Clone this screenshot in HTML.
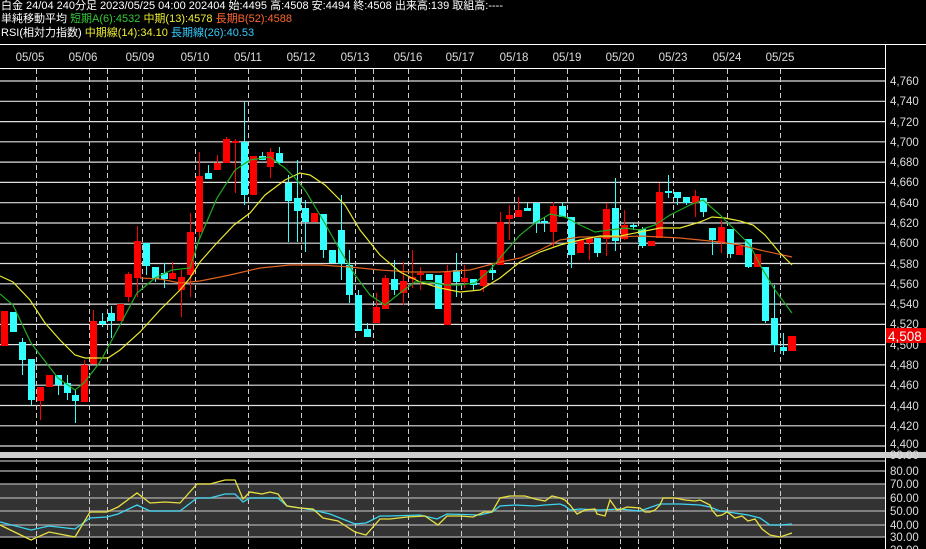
<!DOCTYPE html>
<html><head><meta charset="utf-8"><style>
html,body{margin:0;padding:0;background:#000;width:926px;height:549px;overflow:hidden}
.t{position:absolute;left:1px;font:11px "Liberation Sans","Noto Sans CJK JP",sans-serif;color:#fff;white-space:nowrap;line-height:13px}
svg{position:absolute;left:0;top:0}
svg text{font-family:"Liberation Sans",sans-serif}
</style></head><body>
<div class="t" style="top:0">白金 24/04 240分足 2023/05/25 04:00 202404 始:4495 高:4508 安:4494 終:4508 出来高:139 取組高:----</div>
<div class="t" style="top:13px">単純移動平均 <span style="color:#3c3">短期A(6):4532</span> <span style="color:#ee3">中期(13):4578</span> <span style="color:#f63">長期B(52):4588</span></div>
<div class="t" style="top:27px">RSI(相対力指数) <span style="color:#ee3">中期線(14):34.10</span> <span style="color:#3cf">長期線(26):40.53</span></div>
<svg width="926" height="549" viewBox="0 0 926 549">
<line x1="0" y1="44.5" x2="926" y2="44.5" stroke="#fff"/>
<line x1="0" y1="68.5" x2="885" y2="68.5" stroke="#fff"/>
<line x1="885.5" y1="44" x2="885.5" y2="549" stroke="#fff"/>
<g fill="#ddd" font-size="11.5" text-anchor="middle">
<text x="30" y="61">05/05</text><text x="83" y="61">05/06</text><text x="140" y="61">05/09</text><text x="195" y="61">05/10</text><text x="248" y="61">05/11</text><text x="301" y="61">05/12</text><text x="355" y="61">05/13</text><text x="408" y="61">05/16</text><text x="460" y="61">05/17</text><text x="514" y="61">05/18</text><text x="567" y="61">05/19</text><text x="620" y="61">05/20</text><text x="673" y="61">05/23</text><text x="727" y="61">05/24</text><text x="780" y="61">05/25</text>
</g>
<!-- RSI band -->
<rect x="0" y="484" width="885" height="53" fill="#333"/>
<!-- horizontal grid -->
<g stroke="#e0e0e0" stroke-width="1.2">
<line x1="0" y1="81" x2="885" y2="81"/><line x1="0" y1="101.3" x2="885" y2="101.3"/><line x1="0" y1="121.6" x2="885" y2="121.6"/><line x1="0" y1="141.8" x2="885" y2="141.8"/><line x1="0" y1="162.1" x2="885" y2="162.1"/><line x1="0" y1="182.4" x2="885" y2="182.4"/><line x1="0" y1="202.7" x2="885" y2="202.7"/><line x1="0" y1="223" x2="885" y2="223"/><line x1="0" y1="243.2" x2="885" y2="243.2"/><line x1="0" y1="263.5" x2="885" y2="263.5"/><line x1="0" y1="283.8" x2="885" y2="283.8"/><line x1="0" y1="304.1" x2="885" y2="304.1"/><line x1="0" y1="324.4" x2="885" y2="324.4"/><line x1="0" y1="344.6" x2="885" y2="344.6"/><line x1="0" y1="364.9" x2="885" y2="364.9"/><line x1="0" y1="385.2" x2="885" y2="385.2"/><line x1="0" y1="405.5" x2="885" y2="405.5"/><line x1="0" y1="425.8" x2="885" y2="425.8"/><line x1="0" y1="446" x2="885" y2="446"/>
</g>
<rect x="0" y="452" width="926" height="6" fill="#ccc"/>
<g stroke="#999" stroke-width="1.5">
<line x1="0" y1="461" x2="885" y2="461"/><line x1="0" y1="471" x2="885" y2="471"/><line x1="0" y1="484" x2="885" y2="484"/><line x1="0" y1="498" x2="885" y2="498"/><line x1="0" y1="511" x2="885" y2="511"/><line x1="0" y1="525" x2="885" y2="525"/><line x1="0" y1="537" x2="885" y2="537"/>
</g>
<!-- vertical dashed -->
<g stroke="#ccc" stroke-dasharray="5,3">
<path d="M36.5 69V452M89.5 69V452M107.5 69V452M142.5 69V452M195.5 69V452M248.5 69V452M301.5 69V452M355.5 69V452M373.5 69V452M408.5 69V452M461.5 69V452M514.5 69V452M567.5 69V452M620.5 69V452M638.5 69V452M673.5 69V452M727.5 69V452M780.5 69V452"/>
<path d="M36.5 459V549M89.5 459V549M107.5 459V549M142.5 459V549M195.5 459V549M248.5 459V549M301.5 459V549M355.5 459V549M373.5 459V549M408.5 459V549M461.5 459V549M514.5 459V549M567.5 459V549M620.5 459V549M638.5 459V549M673.5 459V549M727.5 459V549M780.5 459V549"/>
</g>
<!-- wicks -->
<g stroke-width="1">
<path stroke="#f00" d="M4.5 311V346M40.5 387V420M49.5 375V387M84.5 360V402M93.5 310V364M120.5 304V321M128.5 272V302M137.5 226V297M172.5 262V279M181.5 270V317M190.5 213V297M199.5 152V238M217.5 155V170M226.5 137V163M235.5 139V193M253.5 156V195M270.5 148V178M314.5 213V222M376.5 293V323M385.5 275V309M403.5 262V305M412.5 250V288M420.5 267V290M447.5 265V325M464.5 265V288M483.5 270V292M500.5 212V265M509.5 205V240M518.5 197V217M553.5 202V247M580.5 240V253M589.5 238V260M606.5 203V256M624.5 210V240M651.5 241V246M659.5 183V238M695.5 190V217M721.5 220V253M739.5 246V255M757.5 254V267M792.5 336V351"/>
<path stroke="#3ff" d="M13.5 312V332M22.5 338V375M31.5 359V405M58.5 375V395M67.5 375V400M75.5 390V423M102.5 313V327M111.5 306V338M146.5 243V275M155.5 267V282M164.5 263V288M208.5 165V179M244.5 102V205M262.5 152V160M279.5 147V165M288.5 175V242M297.5 160V242M305.5 200V252M323.5 214V258M332.5 250V263M341.5 195V280M349.5 250V303M358.5 290V331M367.5 323V337M394.5 260V295M429.5 274V280M438.5 275V309M456.5 253V297M473.5 279V290M492.5 265V280M527.5 203V211M536.5 203V233M544.5 217V232M562.5 202V217M571.5 217V268M597.5 238V257M615.5 178V251M633.5 223V230M642.5 227V248M668.5 175V198M677.5 192V205M686.5 197V205M703.5 198V217M712.5 228V255M730.5 229V258M748.5 239V268M765.5 267V323M774.5 285V352M783.5 333V355"/>
</g>
<!-- bodies -->
<g fill="#f00">
<rect x="1" y="311" width="7" height="35"/><rect x="37" y="387" width="7" height="14"/><rect x="46" y="375" width="7" height="12"/><rect x="81" y="365" width="7" height="37"/><rect x="90" y="321" width="7" height="43"/><rect x="117" y="304" width="7" height="17"/><rect x="125" y="274" width="7" height="23"/><rect x="134" y="241" width="7" height="37"/><rect x="169" y="273" width="7" height="6"/><rect x="178" y="277" width="7" height="13"/><rect x="187" y="232" width="7" height="43"/><rect x="196" y="176" width="7" height="56"/><rect x="214" y="163" width="7" height="7"/><rect x="223" y="139" width="7" height="24"/><rect x="232" y="141" width="7" height="2"/><rect x="250" y="156" width="7" height="39"/><rect x="267" y="152" width="7" height="15"/><rect x="311" y="213" width="7" height="9"/><rect x="373" y="307" width="7" height="16"/><rect x="382" y="278" width="7" height="31"/><rect x="400" y="281" width="7" height="12"/><rect x="409" y="277" width="7" height="2"/><rect x="417" y="273" width="7" height="2"/><rect x="444" y="272" width="7" height="53"/><rect x="461" y="278" width="7" height="4"/><rect x="480" y="270" width="7" height="16"/><rect x="497" y="222" width="7" height="43"/><rect x="506" y="215" width="7" height="4"/><rect x="515" y="210" width="7" height="7"/><rect x="550" y="206" width="7" height="26"/><rect x="577" y="240" width="7" height="13"/><rect x="586" y="238" width="7" height="5"/><rect x="603" y="209" width="7" height="30"/><rect x="621" y="225" width="7" height="14"/><rect x="648" y="241" width="7" height="5"/><rect x="656" y="192" width="7" height="46"/><rect x="692" y="196" width="7" height="7"/><rect x="718" y="227" width="7" height="16"/><rect x="736" y="246" width="7" height="9"/><rect x="754" y="254" width="7" height="13"/><rect x="788" y="336" width="8" height="15"/>
</g>
<g fill="#3ff">
<rect x="10" y="312" width="7" height="20"/><rect x="19" y="342" width="7" height="18"/><rect x="28" y="359" width="7" height="41"/><rect x="55" y="375" width="7" height="10"/><rect x="64" y="383" width="7" height="10"/><rect x="72" y="395" width="7" height="6"/><rect x="99" y="321" width="7" height="3"/><rect x="108" y="313" width="7" height="8"/><rect x="143" y="243" width="7" height="23"/><rect x="152" y="267" width="7" height="12"/><rect x="161" y="273" width="7" height="6"/><rect x="205" y="173" width="7" height="6"/><rect x="241" y="142" width="7" height="53"/><rect x="259" y="156" width="7" height="4"/><rect x="276" y="153" width="7" height="10"/><rect x="285" y="183" width="7" height="18"/><rect x="294" y="198" width="7" height="13"/><rect x="302" y="208" width="7" height="14"/><rect x="320" y="214" width="7" height="36"/><rect x="329" y="250" width="7" height="13"/><rect x="338" y="230" width="7" height="34"/><rect x="346" y="265" width="7" height="30"/><rect x="355" y="295" width="7" height="36"/><rect x="364" y="329" width="7" height="8"/><rect x="391" y="279" width="7" height="11"/><rect x="426" y="274" width="7" height="6"/><rect x="435" y="275" width="7" height="34"/><rect x="453" y="270" width="7" height="12"/><rect x="470" y="279" width="7" height="6"/><rect x="489" y="270" width="7" height="3"/><rect x="524" y="208" width="7" height="3"/><rect x="533" y="203" width="7" height="20"/><rect x="541" y="221" width="7" height="2"/><rect x="559" y="206" width="7" height="11"/><rect x="568" y="217" width="7" height="38"/><rect x="594" y="238" width="7" height="15"/><rect x="612" y="208" width="7" height="33"/><rect x="630" y="225" width="7" height="2"/><rect x="639" y="229" width="7" height="17"/><rect x="665" y="191" width="7" height="2"/><rect x="674" y="192" width="7" height="6"/><rect x="683" y="197" width="7" height="6"/><rect x="700" y="198" width="7" height="14"/><rect x="709" y="228" width="7" height="12"/><rect x="727" y="229" width="7" height="25"/><rect x="745" y="239" width="7" height="28"/><rect x="762" y="267" width="7" height="54"/><rect x="771" y="318" width="7" height="27"/><rect x="780" y="347" width="7" height="4"/>
</g>
<!-- MAs -->
<g fill="none" stroke-width="1.2">
<polyline stroke="#e06020" points="140,278 160,279 180,283 200,281 230,275 260,268 290,265 320,265 350,267 380,270 410,272 440,272 470,270 500,262 520,258 540,250 560,240 580,237 600,237 620,237 640,236 660,237 680,238 700,240 720,242 740,245 760,250 792,257"/>
<polyline stroke="#e8e830" points="0,276 13,282 30,300 45,323 60,340 75,355 85,358 108,358 120,350 140,332 160,310 180,290 190,278 200,262 215,245 234,225 250,213 265,195 285,180 300,173 310,175 325,185 345,205 360,230 380,255 400,272 420,282 440,288 460,292 480,290 500,278 520,262 540,252 560,245 580,240 600,236 620,236 640,232 660,228 680,228 700,222 712,217 725,218 740,221 753,225 765,235 780,253 792,265"/>
<polyline stroke="#22aa22" points="0,294 13,305 31,343 58,378 75,390 84,383 100,362 120,325 137,293 155,278 172,270 190,268 199,240 217,198 235,170 250,160 270,157 285,168 295,178 305,190 320,215 340,250 355,275 370,295 385,305 400,293 415,282 430,282 445,285 460,285 475,283 490,270 505,252 520,235 535,223 550,214 565,217 580,225 595,232 610,230 625,228 640,230 655,225 670,215 690,205 703,200 720,215 735,230 750,245 760,265 775,290 792,313"/>
</g>
<!-- RSI lines -->
<g fill="none" stroke-width="1.3">
<polyline stroke="#3cd4f0" points="0,522 31,530 49,526 75,529 90,518 107,517 118,514 137,505 150,511 180,511 197,498 210,498 225,494 235,494 243,502 250,498 278,498 287,506 313,510 330,514 355,524 366,523 380,516 390,516 420,515 437,519 447,514 480,515 492,512 500,506 515,505 535,506 545,505 560,504 565,506 570,510 580,509 600,510 620,509 640,511 660,504 680,504 700,505 710,507 720,511 735,513 748,515 760,518 770,525 780,525 792,524"/>
<polyline stroke="#e8e040" points="0,525 31,540 49,532 75,537 90,512 107,512 118,507 137,493 150,503 165,502 180,503 197,484 210,484 225,480 235,480 243,499 250,492 262,494 270,492 278,494 287,506 300,508 313,509 323,518 338,521 355,532 366,535 380,519 390,519 407,517 425,516 438,525 447,516 460,516 473,517 484,512 492,512 500,498 510,496 525,496 535,499 545,501 552,496 560,498 565,500 570,505 577,514 585,510 595,509 597,514 605,516 610,500 617,510 622,509 627,507 640,508 645,512 650,512 655,510 660,505 663,498 675,498 685,500 695,501 700,500 710,505 712,510 717,516 722,515 727,512 730,514 735,518 742,516 748,521 755,519 762,529 770,535 780,537 792,533"/>
</g>
<!-- right axis -->
<g fill="#ddd" font-size="11.5">
<text x="890" y="85">4,760</text><text x="890" y="105">4,740</text><text x="890" y="126">4,720</text><text x="890" y="146">4,700</text><text x="890" y="166">4,680</text><text x="890" y="186">4,660</text><text x="890" y="207">4,640</text><text x="890" y="227">4,620</text><text x="890" y="247">4,600</text><text x="890" y="268">4,580</text><text x="890" y="288">4,560</text><text x="890" y="308">4,540</text><text x="890" y="328">4,520</text><text x="890" y="349">4,500</text><text x="890" y="369">4,480</text><text x="890" y="389">4,460</text><text x="890" y="410">4,440</text><text x="890" y="430">4,420</text><text x="890" y="448">4,400</text>
<text x="890" y="459">90.00</text><text x="890" y="475">80.00</text><text x="890" y="488">70.00</text><text x="890" y="502">60.00</text><text x="890" y="515">50.00</text><text x="890" y="529">40.00</text><text x="890" y="541">30.00</text><text x="890" y="554">20.00</text>
</g>
<rect x="886" y="328" width="40" height="15" fill="#e00"/>
<text x="888" y="341" fill="#fff" font-size="13.5">4,508</text>
</svg>
</body></html>
